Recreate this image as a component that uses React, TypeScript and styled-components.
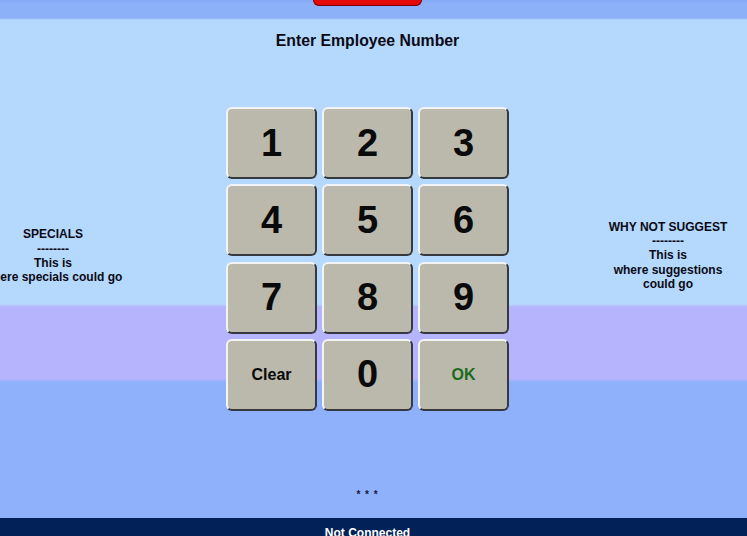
import React from "react";
import styled, { createGlobalStyle } from "styled-components";

const Global = createGlobalStyle`
  html, body { margin: 0; padding: 0; height: 100%; overflow: hidden; }
  body { font-family: "Liberation Sans", Arial, sans-serif; }
  #root { height: 100%; }
`;

const Page = styled.div`
  height: 100vh;
  display: flex;
  flex-direction: column;
  background: linear-gradient(
    to bottom,
    #82a8f6 0px,
    #8db1f9 4px,
    #8db1f9 18px,
    #b5d8fd 20px,
    #b5d8fd 304px,
    #b5b4fc 307px,
    #b5b4fc 379px,
    #8fb0fb 382px,
    #8fb0fb 100%
  );
  color: #0a0a14;
`;

const TopBar = styled.div`
  height: 18px;
  flex: none;
  display: flex;
  justify-content: center;
  padding-right: 12px;
`;

const RedTab = styled.div`
  width: 107px;
  height: 5px;
  background: #e40808;
  border: 1px solid #7a0000;
  border-top: none;
  border-radius: 0 0 6px 6px;
`;

const Content = styled.div`
  flex: 1;
  display: flex;
  flex-direction: column;
  padding-right: 12px;
  min-height: 0;
`;

const Title = styled.h1`
  margin: 14px 0 0;
  font-size: 15.8px;
  line-height: 18px;
  font-weight: bold;
  text-align: center;
`;

const Main = styled.div`
  margin-top: 57px;
  display: grid;
  grid-template-columns: 1fr 283px 1fr;
  align-items: center;
`;

const SidePanel = styled.div<{ $side: "left" | "right"; $width: number }>`
  justify-self: ${(p) => (p.$side === "left" ? "start" : "end")};
  width: ${(p) => p.$width}px;
  display: flex;
  flex-direction: column;
  align-items: center;
  font-size: 12px;
  line-height: 14.3px;
  font-weight: bold;
  text-align: center;
  white-space: nowrap;
  margin-top: ${(p) => (p.$side === "left" ? "-6px" : "-7px")};
`;

const Keypad = styled.div`
  display: grid;
  grid-template-columns: repeat(3, 91px);
  grid-auto-rows: 72px;
  column-gap: 5px;
  row-gap: 5.33px;
`;

const Key = styled.button<{ $small?: boolean; $ok?: boolean }>`
  box-sizing: border-box;
  margin: 0;
  padding: 0;
  background: #bab9ab;
  border-style: solid;
  border-width: 2px;
  border-color: #f2f4f8 #38383f #38383f #f2f4f8;
  border-radius: 6px;
  font-family: "Liberation Sans", Arial, sans-serif;
  font-weight: bold;
  font-size: ${(p) => (p.$small ? "16px" : "38px")};
  color: ${(p) => (p.$ok ? "#1b6b1f" : "#0a0a0a")};
  display: flex;
  align-items: center;
  justify-content: center;
  cursor: pointer;
`;

const Dots = styled.div`
  margin-top: 78px;
  font-size: 10px;
  line-height: 12px;
  font-weight: bold;
  text-align: center;
  color: #1a1a3a;
  letter-spacing: 1px;
`;

const Footer = styled.div`
  height: 18px;
  flex: none;
  background: #022158;
  color: #ffffff;
  font-size: 12px;
  font-weight: bold;
  line-height: 12px;
  padding-top: 9px;
  box-sizing: border-box;
  overflow: hidden;
  text-align: center;
  padding-right: 12px;
`;

const keys: { label: string; small?: boolean; ok?: boolean }[] = [
  { label: "1" },
  { label: "2" },
  { label: "3" },
  { label: "4" },
  { label: "5" },
  { label: "6" },
  { label: "7" },
  { label: "8" },
  { label: "9" },
  { label: "Clear", small: true },
  { label: "0" },
  { label: "OK", small: true, ok: true },
];

export default function App() {
  return (
    <>
      <Global />
      <Page>
        <TopBar>
          <RedTab />
        </TopBar>
        <Content>
          <Title>Enter Employee Number</Title>
          <Main>
            <SidePanel $side="left" $width={106}>
              <span>SPECIALS</span>
              <span>--------</span>
              <span>This is</span>
              <span>where specials could go</span>
            </SidePanel>
            <Keypad>
              {keys.map((k) => (
                <Key key={k.label} $small={k.small} $ok={k.ok}>
                  {k.label}
                </Key>
              ))}
            </Keypad>
            <SidePanel $side="right" $width={134}>
              <span>WHY NOT SUGGEST</span>
              <span>--------</span>
              <span>This is</span>
              <span>where suggestions</span>
              <span>could go</span>
            </SidePanel>
          </Main>
          <Dots>* * *</Dots>
        </Content>
        <Footer>Not Connected</Footer>
      </Page>
    </>
  );
}
